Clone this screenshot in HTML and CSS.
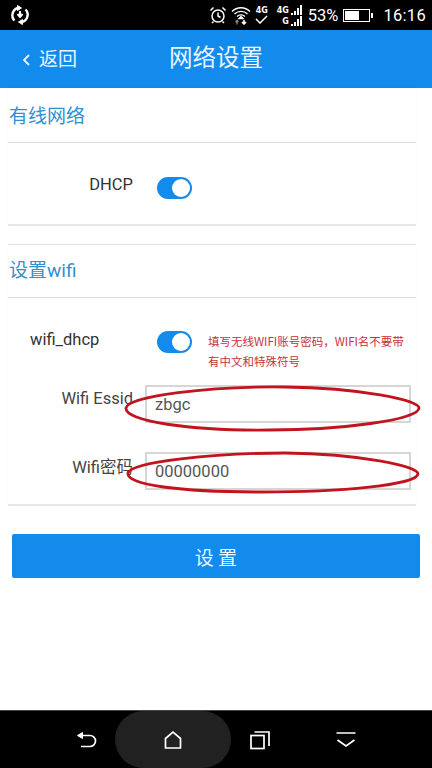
FILE: index.html
```html
<!DOCTYPE html>
<html lang="zh-CN">
<head>
<meta charset="utf-8">
<title>网络设置</title>
<link rel="stylesheet" href="styles.css">
</head>
<body>
<div class="page">
  <div class="status">
    <svg class="sync" width="20" height="20" viewBox="0 0 20 20" fill="none" stroke="#fff" stroke-width="2.400"><path d="M4.500 15.500A7.500 7.500 0 0 1 8 3"/><path d="M15.500 4.500A7.500 7.500 0 0 1 12 17"/><path d="M7.500 0.500l4 2.500-4 2.500z" fill="#fff" stroke-width="1"/><path d="M12.500 14.500l-4 2.500 4 2.500z" fill="#fff" stroke-width="1"/><path d="M10 6v5.500M7.500 9l2.500 3 2.500-3" stroke-width="2"/></svg>
    <div class="status-right">
      <svg width="18" height="18" viewBox="0 0 18 18" fill="none" stroke="#fff" stroke-width="1.500"><circle cx="9" cy="10" r="6"/><path d="M9 6.500V10l2.500 1.500M1.500 4.500l3-3M16.500 4.500l-3-3M4.500 15.500l-1.500 1.500M13.500 15.500l1.500 1.500"/></svg>
      <svg width="20" height="20" viewBox="0 0 20 20" fill="none" stroke="#fff" stroke-width="1.300"><path d="M1 6.500c5-5 13-5 18 0M3.500 9c3.500-3.500 9.500-3.500 13 0M6 11.500c2.200-2.200 5.800-2.200 8 0"/><path d="M10 11.500l-2 2h4z" fill="#fff"/><path d="M6 15.500v4M4.500 17l1.500-1.500L7.500 17" stroke="#888"/><path d="M13 15v3.500M11 17l2 2 2-2" stroke-width="1.600"/></svg>
      <div class="net-check">
        <span class="net-label">4G</span>
        <svg width="13" height="9" viewBox="0 0 13 9" fill="none" stroke="#fff" stroke-width="1.500"><path d="M1 4l4 4 7-7"/></svg>
      </div>
      <div class="signals">
        <div class="signal-row"><span class="net-label">4G</span><span class="bars"><i class="b1"></i><i class="b2"></i><i class="b3"></i><i class="b4"></i></span></div>
        <div class="signal-row lower"><span class="net-label">G</span><span class="bars"><i class="b1"></i><i class="b2"></i><i class="b3"></i><i class="b4"></i></span></div>
      </div>
      <span class="pct">53%</span>
      <div class="battery"><div class="battery-fill"></div></div>
      <span class="clock">16:16</span>
    </div>
  </div>
  <header class="topbar">
    <div class="back">
      <svg width="10" height="14" viewBox="0 0 10 14" fill="none" stroke="#e8f4ff" stroke-width="1.800"><path d="M8 2L3 7l5 5"/></svg>
      <span>返回</span>
    </div>
    <h1 class="title">网络设置</h1>
  </header>
  <main class="content">
    <section class="card first">
      <h2 class="card-title">有线网络</h2>
      <div class="card-body dhcp-body">
        <div class="label-col dhcp-label">DHCP</div>
        <div class="toggle"></div>
      </div>
    </section>
    <section class="card second">
      <h2 class="card-title short">设置wifi</h2>
      <div class="card-body wifi-body">
        <div class="row switch-row">
          <div class="wifi-label">wifi_dhcp</div>
          <div class="toggle"></div>
          <p class="hint">填写无线WIFI账号密码，WIFI名不要带有中文和特殊符号</p>
        </div>
        <div class="row field-row">
          <label class="field-label">Wifi Essid</label>
          <input class="field" value="zbgc">
        </div>
        <div class="row field-row lower">
          <label class="field-label">Wifi密码</label>
          <input class="field" value="00000000">
        </div>
      </div>
    </section>
    <button class="submit">设 置</button>
    <svg class="marks" width="432" height="130" viewBox="0 0 432 130" fill="none" stroke="#c1141f" stroke-width="2.800">
      <path d="M126 30C128 18 210 8 285 9C360 10 419 22 419 30C419 42 340 52 270 52C190 53 124 43 126 30Z"/>
      <path d="M128 95C130 84 215 75 285 75C360 76 418 88 418 96C417 107 340 114 262 114C180 114 126 107 128 95Z"/>
    </svg>
  </main>
  <nav class="navbar">
    <div class="home-pill"></div>
    <svg class="nav-icon back-i" width="22" height="20" viewBox="0 0 22 20" fill="none" stroke="#fff" stroke-width="1.700"><path d="M3 5.500h11a5 5 0 0 1 0 11H5"/><path d="M1.500 5.500L6.500 2.500v6z" fill="#fff" stroke-width="1"/></svg>
    <svg class="nav-icon home-i" width="20" height="20" viewBox="0 0 20 20" fill="none" stroke="#fff" stroke-width="1.700"><path d="M2.500 8.500L10 2l7.500 6.500V18h-15z"/></svg>
    <svg class="nav-icon recent-i" width="22" height="20" viewBox="0 0 22 20" fill="none" stroke="#fff" stroke-width="1.700"><rect x="2" y="5.500" width="13" height="13"/><path d="M5.500 2h14.500v14"/></svg>
    <svg class="nav-icon down-i" width="22" height="20" viewBox="0 0 22 20" fill="none" stroke="#fff" stroke-width="1.700"><path d="M1.500 3h19M2.500 10l8.500 6 8.500-6"/></svg>
  </nav>
</div>
</body>
</html>
```
FILE: styles.css
```css
* { box-sizing: border-box; }
html, body { margin: 0; padding: 0; }
body { font-family: Roboto, "Noto Sans CJK SC", sans-serif; background: #fff; }
.page { width: 432px; height: 768px; display: flex; flex-direction: column; overflow: hidden; }

.status { height: 30px; background: #000; color: #fff; display: flex; align-items: center; justify-content: space-between; padding: 0 6px 0 10px; flex: none; }
.status-right { display: flex; align-items: center; gap: 4px; }
.net-label { font: 700 8px/8px "DejaVu Sans", sans-serif; }
.net-check { display: flex; flex-direction: column; align-items: center; width: 14px; }
.signals { display: flex; flex-direction: column; align-items: flex-end; gap: 0; width: 28px; margin-left: 1px; }
.signal-row { display: flex; align-items: flex-end; height: 11px; gap: 2px; }
.bars { display: flex; align-items: flex-end; gap: 1px; }
.bars i { display: block; width: 2px; background: #fff; }
.bars .b1 { height: 2px; } .bars .b2 { height: 4px; } .bars .b3 { height: 7px; } .bars .b4 { height: 10px; }
.pct { font-size: 16.500px; margin-left: 2px; }
.battery { width: 27px; height: 13px; border: 1.500px solid #fff; margin-left: 1px; padding: 1px; background: #000; position: relative; }
.battery::after { content: ""; position: absolute; right: -4px; top: 3px; width: 2px; height: 5px; background: #fff; }
.battery-fill { width: 14px; height: 100%; background: #fff; }
.clock { font-size: 16.500px; margin-left: 9px; letter-spacing: .3px; }

.topbar { height: 58px; background: #128bed; color: #e8f4ff; display: flex; align-items: center; justify-content: center; position: relative; flex: none; }
.title { margin: 0; font-size: 23.500px; font-weight: 400; line-height: 1; }
.back { position: absolute; left: 21px; top: 21px; display: flex; align-items: center; gap: 8px; font-size: 19px; line-height: 18px; }

.content { flex: 1; position: relative; background: #fff; display: flex; flex-direction: column; align-items: flex-start; }
.card { width: 408px; margin-left: 8px; border-bottom: 2px solid #e6e6e6; background: #fff; box-shadow: 0 0 2px rgba(0, 0, 0, .04); }
.second { margin-top: 18px; border-top: 1px solid #e4e4e4; }
.card-title { margin: 0; height: 55px; border-bottom: 1px solid #dcdcdc; padding: 17px 0 0 1px; font-size: 19px; line-height: 24px; font-weight: 400; color: #2f91d0; }
.card-title.short { height: 53px; padding-top: 14px; }
.card-body { position: relative; }
.dhcp-body { height: 81px; display: flex; align-items: flex-start; padding-top: 31px; }
.dhcp-label { width: 125px; text-align: right; font-size: 16.500px; line-height: 22px; color: #333; }
.toggle { width: 35px; height: 22px; border-radius: 11px; background: #128bed; position: relative; flex: none; }
.dhcp-body .toggle { margin: 3px 0 0 24px; }
.toggle::after { content: ""; position: absolute; right: 2px; top: 2px; width: 18px; height: 18px; border-radius: 50%; background: #fff; }

.wifi-body { height: 206px; padding-top: 31px; display: flex; flex-direction: column; }
.row { display: flex; align-items: flex-start; }
.switch-row { height: 56px; }
.wifi-label { width: 92px; padding-left: 22px; font-size: 16.500px; line-height: 22px; color: #333; white-space: nowrap; }
.switch-row .toggle { margin: 2px 0 0 57px; }
.hint { margin: 2px 0 0 16px; width: 200px; font: 11.500px/20px "Noto Sans CJK SC", sans-serif; color: #c8303a; }
.field-row { height: 38px; }
.field-row.lower { margin-top: 29px; }
.field-label { width: 125px; padding-top: 3px; text-align: right; font-size: 16.500px; line-height: 22px; color: #444; flex: none; white-space: nowrap; }
.lower .field-label { padding-top: 5px; }
.field { width: 266px; height: 38px; margin-left: 12px; border: 2px solid #d6d6d6; padding: 0 8px; font: 16.500px Roboto, sans-serif; color: #555; background: #fff; outline: none; border-radius: 0; }

.submit { width: 408px; height: 44px; margin-top: 28px; margin-left: 12px; background: #128bed; color: #eef7ff; border: 0; border-radius: 2px; font: 19px "Noto Sans CJK SC", sans-serif; }
.marks { position: absolute; left: 0; top: 290px; }

.navbar { height: 58px; background: #000; border-top: 1px solid #444; position: relative; display: grid; grid-template-columns: 87px 86px 86px 1fr; align-items: center; padding: 0 0 0 76px; flex: none; }
.home-pill { position: absolute; left: 115px; top: 0; width: 116px; height: 57px; border-radius: 29px; background: #212121; }
.nav-icon { position: relative; }
```
